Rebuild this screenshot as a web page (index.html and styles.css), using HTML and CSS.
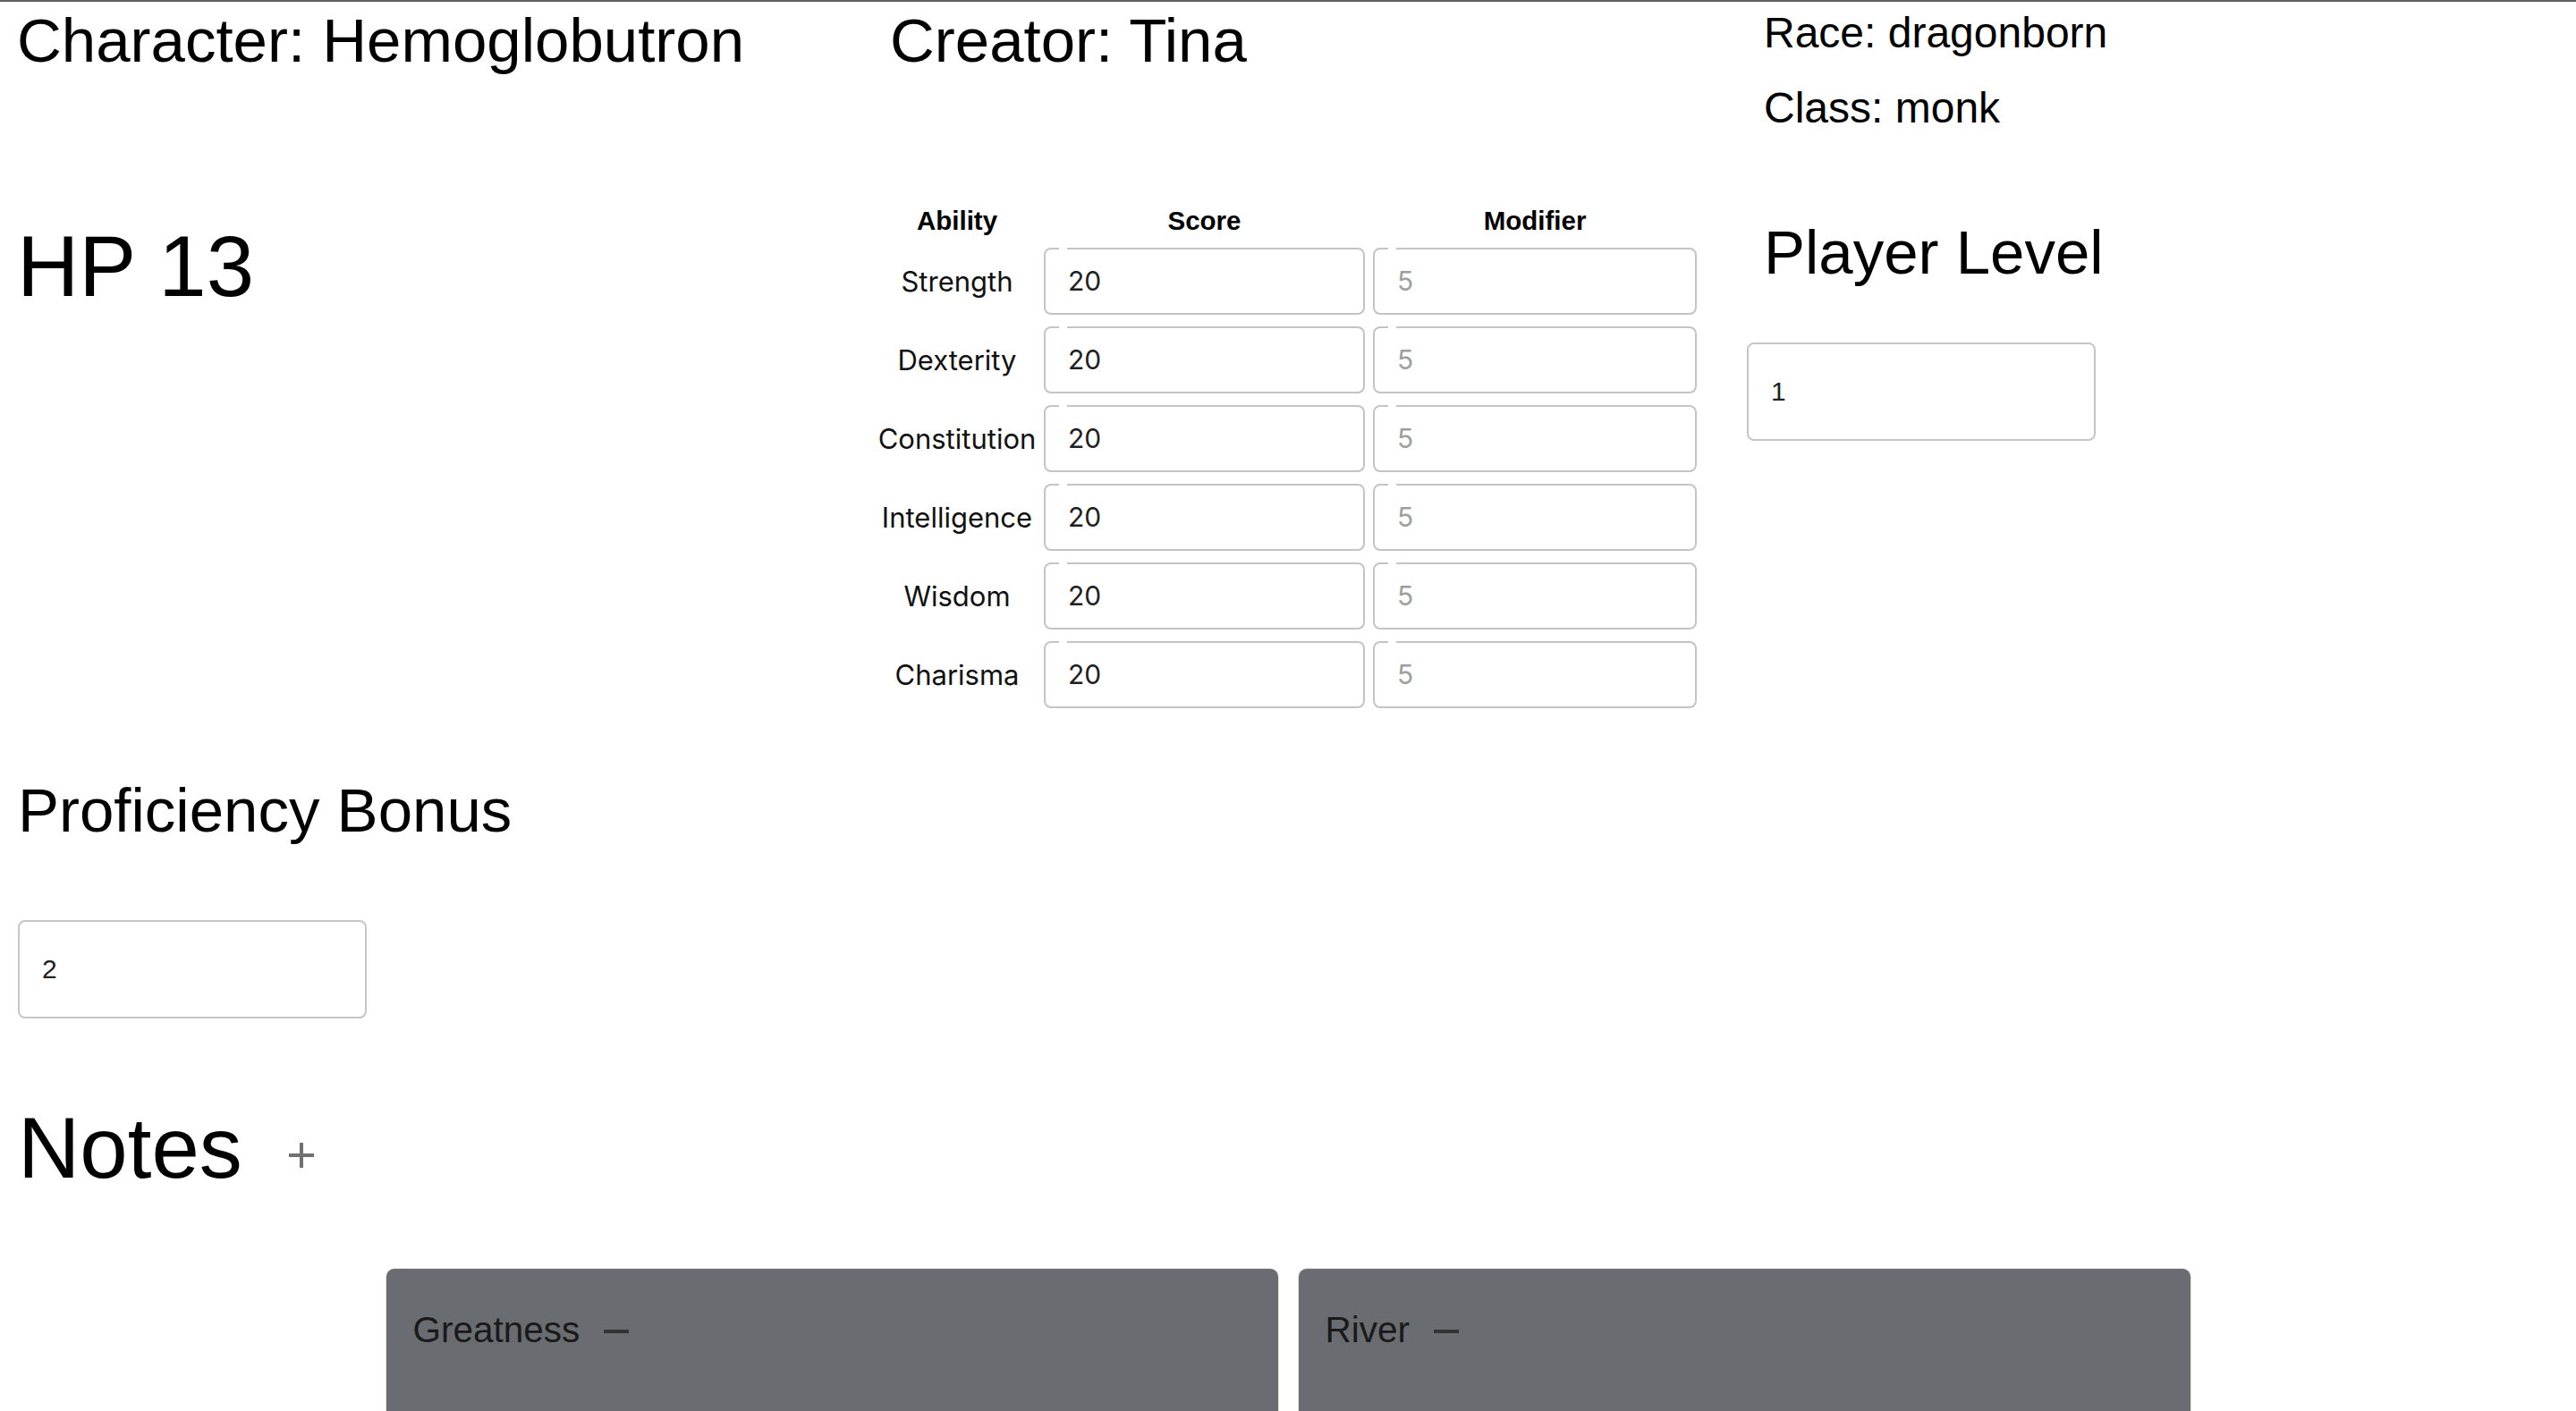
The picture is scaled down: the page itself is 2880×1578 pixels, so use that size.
FILE: index.html
```html
<!DOCTYPE html>
<html lang="en">
<head>
<meta charset="utf-8">
<title>Character Sheet</title>
<link rel="stylesheet" href="styles.css">
</head>
<body>
<div class="topbar"></div>
<main class="sheet">
  <section class="identity">
    <div class="col col-char"><h2 class="title">Character: Hemoglobutron</h2></div>
    <div class="col col-creator"><h2 class="title">Creator: Tina</h2></div>
    <div class="col col-meta">
      <h4 class="meta meta-race">Race: dragonborn</h4>
      <h4 class="meta meta-class">Class: monk</h4>
    </div>
  </section>

  <section class="stats">
    <div class="col"><h1 class="hp">HP 13</h1></div>
    <div class="col">
      <div class="abilities">
        <div class="ab-head ab-first">Ability</div>
        <div class="ab-head">Score</div>
        <div class="ab-head">Modifier</div>

        <div class="ab-label">Strength</div>
        <div class="field"><span class="notch"></span><input type="text" value="20"></div>
        <div class="field"><span class="notch"></span><input class="mod" type="text" value="5" readonly></div>

        <div class="ab-label">Dexterity</div>
        <div class="field"><span class="notch"></span><input type="text" value="20"></div>
        <div class="field"><span class="notch"></span><input class="mod" type="text" value="5" readonly></div>

        <div class="ab-label">Constitution</div>
        <div class="field"><span class="notch"></span><input type="text" value="20"></div>
        <div class="field"><span class="notch"></span><input class="mod" type="text" value="5" readonly></div>

        <div class="ab-label">Intelligence</div>
        <div class="field"><span class="notch"></span><input type="text" value="20"></div>
        <div class="field"><span class="notch"></span><input class="mod" type="text" value="5" readonly></div>

        <div class="ab-label">Wisdom</div>
        <div class="field"><span class="notch"></span><input type="text" value="20"></div>
        <div class="field"><span class="notch"></span><input class="mod" type="text" value="5" readonly></div>

        <div class="ab-label">Charisma</div>
        <div class="field"><span class="notch"></span><input type="text" value="20"></div>
        <div class="field"><span class="notch"></span><input class="mod" type="text" value="5" readonly></div>
      </div>
    </div>
    <div class="col level">
      <h2 class="title level-title">Player Level</h2>
      <input class="num-input level-input" type="text" value="1">
    </div>
  </section>

  <section class="prof">
    <h2 class="title prof-title">Proficiency Bonus</h2>
    <input class="num-input prof-input" type="text" value="2">
  </section>

  <section class="notes">
    <div class="notes-head">
      <h1 class="notes-title">Notes</h1>
      <button class="add-note" type="button" aria-label="Add note">
        <svg width="28" height="28" viewBox="0 0 28 28"><path d="M14 0V28M0 14H28" stroke="#707070" stroke-width="4"/></svg>
      </button>
    </div>
    <div class="note-list">
      <article class="note-card">
        <div class="note-head">
          <h5 class="note-title">Greatness</h5>
          <button class="remove-note" type="button" aria-label="Remove note">
            <svg width="28" height="4" viewBox="0 0 28 4"><path d="M0 2H28" stroke="#333" stroke-width="4"/></svg>
          </button>
        </div>
      </article>
      <article class="note-card">
        <div class="note-head">
          <h5 class="note-title">River</h5>
          <button class="remove-note" type="button" aria-label="Remove note">
            <svg width="28" height="4" viewBox="0 0 28 4"><path d="M0 2H28" stroke="#333" stroke-width="4"/></svg>
          </button>
        </div>
      </article>
    </div>
  </section>
</main>
</body>
</html>
```
FILE: styles.css
```css
* { box-sizing: border-box; }

body {
  margin: 0;
  font-family: "Liberation Sans", Arial, sans-serif;
  color: #000;
  background: #fff;
}

.topbar {
  height: 2px;
  background: #5e5e5e;
}

.identity,
.stats {
  display: grid;
  grid-template-columns: 973px 978px 1fr;
}

.col-char { padding-left: 19px; }
.col-creator { padding-left: 22px; }
.col-meta { padding-left: 21px; }

.title {
  font-size: 69px;
  font-weight: 400;
  line-height: 1.2;
  margin: 2.7px 0 0;
}

.meta {
  font-size: 48px;
  font-weight: 400;
  line-height: 1.2;
  margin: 0;
}
.meta-race { margin-top: 5.6px; }
.meta-class { margin-top: 26.4px; }

.hp {
  font-size: 96px;
  font-weight: 400;
  line-height: 1.2;
  margin: 90.8px 0 0 19px;
}

.abilities {
  margin: 80.6px 0 0 4px;
  display: grid;
  grid-template-columns: 181px 359px 362px;
  grid-template-rows: 34px;
  grid-auto-rows: 75px;
  column-gap: 9px;
  row-gap: 13px;
}

.ab-head {
  font-weight: 700;
  font-size: 29.5px;
  line-height: 34px;
  text-align: center;
}
.ab-first { padding-left: 5px; }

.ab-label {
  font-family: Inter, "Liberation Sans", sans-serif;
  font-size: 31px;
  color: #111;
  display: flex;
  align-items: center;
  justify-content: center;
  padding-left: 5px;
  white-space: nowrap;
}

.field {
  position: relative;
  border: 2px solid #c4c4c4;
  border-radius: 8px;
  display: flex;
  align-items: center;
}

.notch {
  position: absolute;
  top: -2px;
  left: 15px;
  width: 9px;
  height: 2px;
  background: #fff;
}

.field input {
  border: 0;
  background: transparent;
  font-family: Inter, "Liberation Sans", sans-serif;
  font-size: 30px;
  color: #212121;
  padding: 0 0 0 25px;
  width: 100%;
  height: 100%;
  outline: none;
}
.field input.mod { color: #9e9e9e; }

.level-title { margin: 92.5px 0 0 21px; }

.num-input {
  display: block;
  width: 390px;
  height: 110px;
  border: 2px solid #c6c6c6;
  border-radius: 8px;
  font-family: "Liberation Sans", Arial, sans-serif;
  font-size: 30px;
  color: #222;
  padding: 0 0 0 25px;
  background: #fff;
  outline: none;
}
.level-input { margin: 58.5px 0 0 2px; }

.prof { padding-left: 20px; }
.prof-title { margin-top: 73.9px; }
.prof-input { margin-top: 80.5px; }

.notes-head {
  display: flex;
  align-items: center;
  margin-top: 87px;
  padding-left: 20px;
}
.notes-title {
  font-size: 96px;
  font-weight: 400;
  line-height: 1.2;
  margin: 0;
}
.add-note {
  margin: 17px 0 0 52px;
  padding: 0;
  border: 0;
  background: none;
  width: 28px;
  height: 28px;
  display: flex;
}

.note-list {
  display: flex;
  justify-content: center;
  gap: 21px;
  margin-top: 76.8px;
}
.note-card {
  width: 999px;
  height: 320px;
  background: #696c71;
  border: 1px solid #e6e6e6;
  border-radius: 10px;
  padding: 43.7px 30px;
}
.note-head {
  display: flex;
  align-items: center;
}
.note-title {
  font-size: 40.5px;
  font-weight: 400;
  line-height: 1.2;
  color: #1a1a1a;
  margin: 0;
}
.remove-note {
  margin: 4px 0 0 27px;
  padding: 0;
  border: 0;
  background: none;
  width: 28px;
  height: 4px;
  display: flex;
}
```
